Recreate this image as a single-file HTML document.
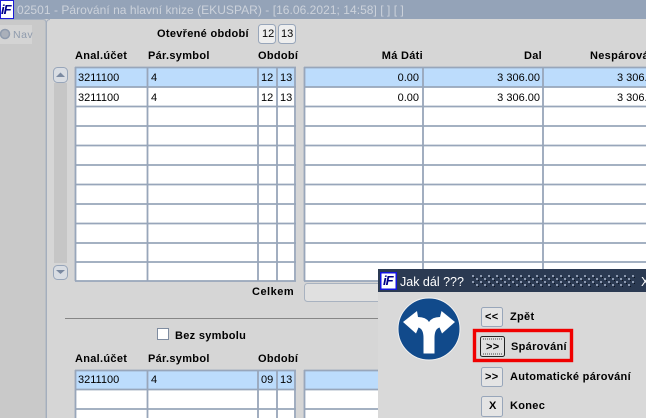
<!DOCTYPE html>
<html><head><meta charset="utf-8"><style>
html,body{margin:0;padding:0}
body{width:646px;height:418px;overflow:hidden;position:relative;background:#d6d6d6;font-family:"Liberation Sans",sans-serif;font-size:12px;color:#000}
.a{position:absolute;white-space:nowrap;line-height:16px}
.b{font-weight:bold;letter-spacing:.3px;font-size:11px}
.r{text-align:right}
.t{font-size:11px}
.l{font:italic bold 13px/14px "Liberation Sans",sans-serif;color:#00008b;letter-spacing:-1px}
svg{position:absolute;left:0;top:0}
</style></head><body>
<svg width="646" height="418" viewBox="0 0 646 418">
<defs><pattern id="d" x="472" y="275" width="8" height="6" patternUnits="userSpaceOnUse"><rect x="0" y="0" width="2" height="2" fill="#8d9ab0"/><rect x="2" y="2" width="1" height="1" fill="#0d1420"/><rect x="4" y="3" width="2" height="2" fill="#8d9ab0"/><rect x="6" y="5" width="1" height="1" fill="#0d1420"/></pattern></defs>
<rect width="646" height="19" fill="#94a3b8"/>
<rect x="0" y="19" width="46" height="399" fill="#c9c9c9"/>
<path d="M0 19.5H43Q46 19.5 46 23V418" fill="none" stroke="#a8b2c0"/>
<path d="M46.5 418V23Q46.5 19.5 50 19.5" fill="none" stroke="#a4aebd"/>
<rect x="0" y="25" width="32" height="19" fill="#d4d4d4"/>
<circle cx="5" cy="34" r="4.5" fill="#aab0ba" stroke="#8f9bad" stroke-width="1.5"/>
<rect x="0" y="0" width="14" height="19" fill="#1b1bd8"/><rect x="1" y="1" width="12" height="17" fill="#fff"/>
<rect x="54" y="83" width="13" height="180" fill="#c6c6c6"/>
<rect x="53.5" y="67.5" width="14" height="15" rx="4" fill="#d9dde3" stroke="#98a6ba"/>
<path d="M56 77L60.5 72.5 65 77Z" fill="#7b8aa1"/>
<rect x="53.5" y="265.5" width="14" height="14" rx="4" fill="#d9dde3" stroke="#98a6ba"/>
<path d="M56 270L60.5 274 65 270Z" fill="#7b8aa1"/>
<rect x="258.5" y="24.5" width="17" height="19" rx="3" fill="#eee" stroke="#98a6ba"/>
<rect x="278.5" y="24.5" width="17" height="19" rx="3" fill="#eee" stroke="#98a6ba"/>
<g>
<rect x="75" y="67" width="221" height="214" fill="#fff"/>
<rect x="304" y="67" width="342" height="214" fill="#fff"/>
<rect x="75" y="67" width="221" height="20" fill="#bcdcfc"/>
<rect x="304" y="67" width="342" height="20" fill="#bcdcfc"/>
<path d="M75 67.5H296M75 87H296M75 106.5H296M75 126H296M75 145.5H296M75 165H296M75 184.5H296M75 204H296M75 223.5H296M75 243H296M75 262H296M75 281H296M304 67.5H646M304 87H646M304 106.5H646M304 126H646M304 145.5H646M304 165H646M304 184.5H646M304 204H646M304 223.5H646M304 243H646M304 262H646M304 281H646" stroke="#98a6ba" stroke-width="1.8" fill="none"/>
<path d="M75.5 67V281M147.5 67V281M258 67V281M277 67V281M295 67V281M304.5 67V281M423 67V281M543 67V281" stroke="#98a6ba" stroke-width="1.8" fill="none"/>
</g>
<rect x="304.5" y="283.5" width="100" height="18" rx="3" fill="#e0e0e0" stroke="#a8b2c0"/>
<path d="M65 318.5H380" stroke="#868686" stroke-width="1"/>
<rect x="157.5" y="328.5" width="11" height="11" fill="#fff" stroke="#7f8ca0"/>
<g>
<rect x="75" y="370" width="221" height="48" fill="#fff"/>
<rect x="304" y="370" width="74" height="48" fill="#fff"/>
<rect x="75" y="370" width="221" height="19" fill="#bcdcfc"/>
<rect x="304" y="370" width="74" height="19" fill="#bcdcfc"/>
<path d="M75 370.5H296M75 389.5H296M75 409H296M304 370.5H378M304 389.5H378M304 409H378" stroke="#98a6ba" stroke-width="1.8" fill="none"/>
<path d="M75.5 370V418M147.5 370V418M258 370V418M277 370V418M295 370V418M304.5 370V418" stroke="#98a6ba" stroke-width="1.8" fill="none"/>
</g>
<rect x="378" y="270" width="268" height="148" fill="#d9d9d9"/>
<rect x="378" y="269" width="268" height="23" fill="#2b3a52"/>
<rect x="472" y="275" width="164" height="12" fill="url(#d)"/>
<rect x="380" y="272" width="17" height="18" fill="#1414e0"/><rect x="381.5" y="273.5" width="14" height="15" fill="#fff"/>
<circle cx="429" cy="329" r="31" fill="#114a8b" stroke="#f2f2f2" stroke-width="1"/>
<path d="M403 322L417 311 418 317Q426 317 429 322 432 317 440 317L441.5 311 455 322 442 333.5 439.5 327.5Q434.5 329 434.5 338V353.5H423.5V338Q423.5 329 418.5 327.5L416 333.5Z" fill="#fff"/>
<rect x="481.5" y="307.5" width="21" height="19" rx="2" fill="#e4e4e4" stroke="#98a6ba"/>
<rect x="480.5" y="336.5" width="24" height="20" rx="2" fill="#dfdfdf" stroke="#222"/>
<path d="M483 339H502M483 354H502" stroke="#444" stroke-dasharray="1 1"/>
<rect x="481.5" y="367.5" width="21" height="19" rx="2" fill="#e4e4e4" stroke="#98a6ba"/>
<rect x="481.5" y="396.5" width="21" height="20" rx="2" fill="#e4e4e4" stroke="#98a6ba"/>
<rect x="474.5" y="330.5" width="97" height="30" fill="none" stroke="#f00000" stroke-width="3.4"/>
</svg>
<div class="a l" style="left:1px;top:3px">iF</div>
<div class="a" style="left:17px;top:2px;color:#ccd2db;font-size:12px;letter-spacing:.04px">02501 - Párování na hlavní knize (EKUSPAR) - [16.06.2021; 14:58] [ ] [ ]</div>
<div class="a" style="left:13px;top:27px;color:#8f9bad;font-size:10.5px;letter-spacing:.5px">Nav</div>
<div class="a b" style="left:157px;top:26px">Otevřené období</div>
<div class="a t" style="left:262px;top:26px">12</div><div class="a t" style="left:281px;top:26px">13</div>
<div class="a b" style="left:75px;top:48px">Anal.účet</div><div class="a b" style="left:148px;top:48px">Pár.symbol</div><div class="a b" style="left:258px;top:48px">Období</div>
<div class="a b r" style="right:223px;top:48px">Má Dáti</div><div class="a b r" style="right:104px;top:48px">Dal</div><div class="a b" style="left:590px;top:48px">Nespárová</div>
<div class="a t" style="left:78px;top:70px">3211100</div><div class="a t" style="left:151px;top:70px">4</div><div class="a t" style="left:261px;top:70px">12</div><div class="a t" style="left:280px;top:70px">13</div>
<div class="a t r" style="right:227px;top:70px">0.00</div><div class="a t r" style="right:106px;top:70px">3 306.00</div><div class="a t" style="left:617px;top:70px">3 306.</div>
<div class="a t" style="left:78px;top:90px">3211100</div><div class="a t" style="left:151px;top:90px">4</div><div class="a t" style="left:261px;top:90px">12</div><div class="a t" style="left:280px;top:90px">13</div>
<div class="a t r" style="right:227px;top:90px">0.00</div><div class="a t r" style="right:106px;top:90px">3 306.00</div><div class="a t" style="left:617px;top:90px">3 306.</div>
<div class="a b" style="left:252px;top:284px;letter-spacing:.5px">Celkem</div>
<div class="a b" style="left:175px;top:328px">Bez symbolu</div>
<div class="a b" style="left:75px;top:351px">Anal.účet</div><div class="a b" style="left:148px;top:351px">Pár.symbol</div><div class="a b" style="left:258px;top:351px">Období</div>
<div class="a t" style="left:78px;top:372px">3211100</div><div class="a t" style="left:151px;top:372px">4</div><div class="a t" style="left:261px;top:372px">09</div><div class="a t" style="left:280px;top:372px">13</div>
<div class="a l" style="left:383px;top:274px">iF</div>
<div class="a" style="left:400px;top:274px;color:#fff;font-size:12.5px">Jak dál ???</div>
<div class="a" style="left:641px;top:274px;color:#fff;font-size:12.5px">X</div>
<div class="a b" style="left:485px;top:309px">&lt;&lt;</div>
<div class="a b" style="left:486px;top:339px">&gt;&gt;</div>
<div class="a b" style="left:485px;top:369px">&gt;&gt;</div>
<div class="a b" style="left:489px;top:398px">X</div>
<div class="a b" style="left:510px;top:309px">Zpět</div>
<div class="a b" style="left:511px;top:339px">Spárování</div>
<div class="a b" style="left:510px;top:369px">Automatické párování</div>
<div class="a b" style="left:510px;top:398px">Konec</div>
</body></html>
